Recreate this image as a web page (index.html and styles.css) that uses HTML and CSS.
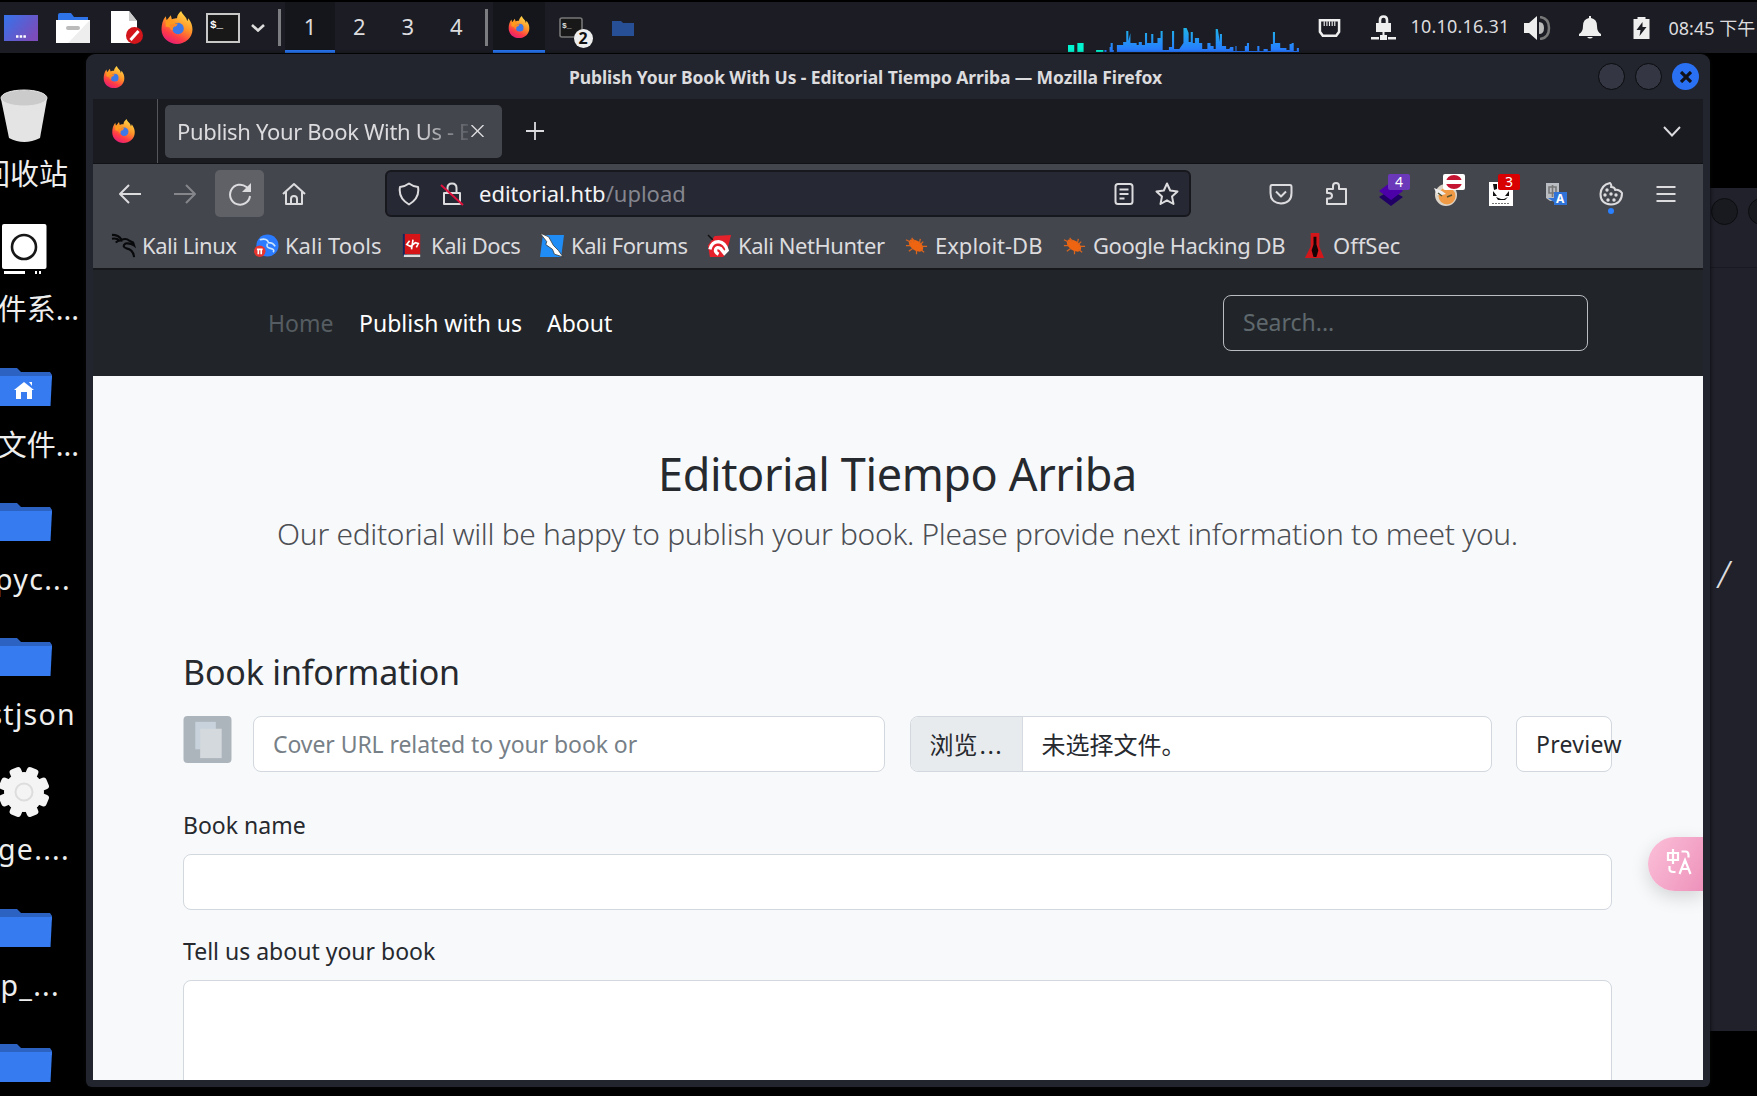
FILE: index.html
```html
<!DOCTYPE html>
<html lang="zh-CN">
<head>
<meta charset="utf-8">
<title>Publish Your Book With Us - Editorial Tiempo Arriba</title>
<link rel="stylesheet" href="styles.css">
</head>
<body>
<svg width="0" height="0" class="defs">
  <defs>
    <linearGradient id="fxg" x1=".8" y1="0" x2=".3" y2="1"><stop offset="0" stop-color="#ffe14d"/><stop offset=".45" stop-color="#ff9328"/><stop offset=".75" stop-color="#ff3d45"/><stop offset="1" stop-color="#e51d77"/></linearGradient>
    <linearGradient id="desk" x1="0" x2="1" y2=".6"><stop offset="0" stop-color="#3573ec"/><stop offset="1" stop-color="#7a4dbb"/></linearGradient>
    <linearGradient id="cpu" x1="0" y1="0" x2="0" y2="1"><stop offset="0" stop-color="#20b4e8"/><stop offset="1" stop-color="#2777ff"/></linearGradient>
    <symbol id="fx" viewBox="0 0 32 32">
      <path fill="url(#fxg)" d="M20 0c1 3 3 4 5 7l1 3 1-3c3 4 4 7 4 11 0 8-7 14-15 14S1 26 1 18c0-5 1-9 4-13l1 4 4-5 1 4c2-1 4-1 5-1 0-3 2-5 4-7z"/>
      <path fill="#ff9a1f" d="M5 9c2-1 4-1 7 0l5 3-4 2-3 2-5-1z"/>
      <circle cx="17" cy="17" r="5.6" fill="#3c78e8"/>
      <path fill="#ff8a25" d="M9 13c3 0 5-1 8-1l-2 3c-3 0-3 2-3 4-3-1-4-3-3-6z"/>
    </symbol>
    <symbol id="folder" viewBox="0 0 52 38"><path fill="#2c62c2" d="M0 0h17l4 4h29l2 3v4H0z"/><path fill="#367bf0" d="M0 8h52l-1.500 30H0z"/></symbol>
    <symbol id="bug" viewBox="0 0 26 26"><ellipse cx="12.500" cy="13" rx="8.500" ry="5" transform="rotate(35 12.500 13)" fill="#ee6410"/><path stroke="#d9651f" stroke-width="1.300" d="M2 7l6 3M8 5l3 4M17 6l-1 5M24 14l-6 0M21 20l-4-3M13 22l0-4M5 19l4-3M2 13l5 0M20 9l-3 3"/></symbol>
  </defs>
</svg>

<header class="panel">
  <svg class="p-desk" viewBox="0 0 34 26"><rect width="34" height="26" fill="url(#desk)"/><path stroke="#fff" stroke-width="2.500" stroke-dasharray="2.500 1.200" d="M12 21.500h10"/></svg>
  <svg class="p-files" viewBox="0 0 34 30"><path fill="#2f73e8" d="M2 2q0-2 2-2h11l3 4h14v6H2z"/><rect y="7" width="34" height="23" fill="#fff"/><path fill="#eee" d="M34 7v23H12z"/><rect x="10" y="13" width="14" height="4" rx="2" fill="#bbb"/></svg>
  <svg class="p-doc" viewBox="0 0 33 33"><path fill="#fff" d="M0 0h18l8 10v22H0z"/><path fill="#ccc" d="M18 0l8 10h-8z"/><circle cx="23.500" cy="24.500" r="8.500" fill="#d3161b"/><path stroke="#fff" stroke-width="3" d="M19.500 29l8-9"/></svg>
  <svg class="p-fx"><use href="#fx"/></svg>
  <svg class="p-term" viewBox="0 0 34 30"><rect x="1" y="1" width="32" height="28" fill="#181818" stroke="#c8c8c8" stroke-width="2"/><text x="4" y="15" class="term-glyph">$_</text></svg>
  <svg class="p-chev" viewBox="0 0 14 8"><path fill="none" stroke="#ddd" stroke-width="2.600" d="M1 1l6 5.500L13 1"/></svg>
  <i class="sep s1"></i>
  <nav class="spaces"><span class="on">1</span><span>2</span><span>3</span><span>4</span></nav>
  <i class="sep s2"></i>
  <div class="task on"><svg class="t-fx"><use href="#fx"/></svg></div>
  <div class="task-term"><svg viewBox="0 0 24 21"><rect x="1" y="1" width="22" height="19" rx="2" fill="#181818" stroke="#777" stroke-width="1.600"/><text x="3" y="11" class="term-small">$_</text></svg><b class="count">2</b></div>
  <svg class="t-folder" viewBox="0 0 22 16"><path fill="#264f95" d="M0 1h9l2 2h11v13H0z"/></svg>
  <svg class="graph" viewBox="0 0 224 24" preserveAspectRatio="none"><path fill="#00f5d0" d="M0 17h6v7H0zM9 15h6v9H9zM27 22h7v2h-7z"/><path fill="url(#cpu)" d="M35 24v-2h2v2h3v-5h1v-4h2v7h1v2h3v-7h6v-3h3V3h2v10l2-8v10h6v2h2v-3h3v3h3V5h2v10h4V6h2v9h4V10h3V3h2v19h6v-3h3V3h2v18h5l4-6V0h3l2 5v9h2V4h2v11h2v-5h4v5h3v6h5v-6h3v3h3v3h2V1h2l2 13V6h2v12h4v3h3l1-2h3v4h2v-5h1v5h8v-5h2v-3h2v8h8v-5h2v5h4v-2h4v2h3v-7h2V4h2v11h5v5h6v2h3v-6h2v-1h2v8h3v-3h2v4z"/></svg>
  <svg class="eth" viewBox="0 0 24 20"><path fill="none" stroke="#eee" stroke-width="2.600" d="M2 2h20v12l-3 4H5l-3-4z"/><path stroke="#eee" stroke-width="1.200" d="M6.500 3v5M9.300 3v5M12 3v5M14.800 3v5M17.500 3v5"/></svg>
  <svg class="vpn" viewBox="0 0 25 25"><path fill="none" stroke="#eee" stroke-width="2.600" d="M9 9V5q0-3.500 3.500-3.500T16 5v4"/><path fill="#eee" d="M5 8h15v9H5zM11.500 17h2v3h-2zM0 22h8v2.500H0zM17 22h8v2.500h-8zM9 20h7v5H9z"/></svg>
  <span class="ip">10.10.16.31</span>
  <svg class="vol" viewBox="0 0 27 24"><path fill="#eee" d="M0 7h5l8-7v24l-8-7H0z"/><path fill="#bbb" d="M15 6q5 0 5 6t-5 6z"/><path fill="none" stroke="#777" stroke-width="2.500" d="M16 1q9 1 9 11t-9 11"/></svg>
  <svg class="bell" viewBox="0 0 22 23"><path fill="#eee" d="M10 0h2v2q6 1 6 8 0 6 4 8v2H0v-2q4-2 4-8 0-7 6-8zM8 21h6q-3 3-6 0z"/></svg>
  <svg class="bat" viewBox="0 0 16 22"><path fill="#eee" d="M4 0h8v2h4v20H0V2h4z"/><path fill="#1c1d24" d="M9 5l-6 8h4l-1 6 7-9H9z"/></svg>
  <span class="clock">08:45 下午</span>
</header>

<aside class="desktop">
  <div class="item"><svg class="ic" viewBox="0 0 52 54"><path fill="#e4e4e4" d="M1 10l8 39q15 8 31 0l7-39z"/><ellipse cx="24" cy="9" rx="23" ry="8" fill="#cbcbcb" stroke="#e6e6e6"/></svg><span class="e68">回收站</span></div>
  <div class="item"><svg class="ic" viewBox="0 0 52 54"><rect x="2" y="0" width="44.500" height="45" rx="2" fill="#fff"/><circle cx="24" cy="23" r="12" fill="none" stroke="#171717" stroke-width="2.600"/><path fill="#fff" d="M4 47h21v3H4zM35 47h2v3h-2zM39 47h2v3h-2z"/></svg><span class="e78">文件系...</span></div>
  <div class="item"><svg class="ic" viewBox="0 0 52 54"><use href="#folder" y="8" width="52" height="38"/><path fill="#fff" d="M24 22l10 8h-2v9h-5v-7h-6v7h-5v-9h-2zM29 22h3v4z"/></svg><span class="e78">主文件...</span></div>
  <div class="item"><svg class="ic" viewBox="0 0 52 54"><use href="#folder" y="8" width="52" height="38"/></svg><span class="lat e69">pyc...</span></div>
  <div class="item"><svg class="ic" viewBox="0 0 52 54"><use href="#folder" y="8" width="52" height="38"/></svg><span class="lat e73">stjson</span></div>
  <div class="item"><svg class="ic" viewBox="0 0 52 54"><g transform="translate(24 27)" fill="#f4f4f4"><circle r="20"/><rect x="-6" y="-25.500" width="12" height="51" rx="3" transform="rotate(22.500)"/><rect x="-6" y="-25.500" width="12" height="51" rx="3" transform="rotate(67.500)"/><rect x="-6" y="-25.500" width="12" height="51" rx="3" transform="rotate(112.500)"/><rect x="-6" y="-25.500" width="12" height="51" rx="3" transform="rotate(157.500)"/><circle r="8.500" stroke="#ddd" stroke-width="2"/></g></svg><span class="lat e68">ge....</span></div>
  <div class="item"><svg class="ic" viewBox="0 0 52 54"><use href="#folder" y="8" width="52" height="38"/></svg><span class="lat e58">p_...</span></div>
  <div class="item"><svg class="ic" viewBox="0 0 52 54"><use href="#folder" y="8" width="52" height="38"/></svg></div>
</aside>

<section class="terminal">
  <div class="term-head"><i></i><i></i></div>
  <span class="slash">/</span>
</section>

<main class="window">
  <div class="titlebar">
    <svg class="w-fx"><use href="#fx"/></svg>
    <h1>Publish Your Book With Us - Editorial Tiempo Arriba — Mozilla Firefox</h1>
    <div class="wbtns"><i></i><i></i><i class="close"><svg viewBox="0 0 12 12"><path stroke="#101218" stroke-width="3.200" d="M1 1l10 10M11 1L1 11"/></svg></i></div>
  </div>
  <div class="chrome">
    <div class="tabs">
      <div class="pinned"><svg><use href="#fx"/></svg></div>
      <div class="tab"><span class="tab-label">Publish Your Book With Us - Editorial</span><svg viewBox="0 0 12 12"><path stroke="#dcdcdf" stroke-width="1.400" d="M0 0l12 12M12 0L0 12"/></svg></div>
      <svg class="plus" viewBox="0 0 18 18"><path stroke="#dcdcdf" stroke-width="1.800" d="M9 0v18M0 9h18"/></svg>
      <svg class="all" viewBox="0 0 18 11"><path fill="none" stroke="#dcdcdf" stroke-width="1.900" d="M1 1l8 8.500L17 1"/></svg>
    </div>
    <div class="toolbar">
      <svg class="ti back" viewBox="0 0 24 24"><path d="M23 12H2M11 3l-9 9 9 9"/></svg>
      <svg class="ti fwd" viewBox="0 0 24 24"><path d="M1 12h21M13 3l9 9-9 9"/></svg>
      <div class="reload"><svg class="ti" viewBox="0 0 24 24"><path d="M22 14a10 10 0 1 1-3.500-9l2 2"/><path fill="#dcdcdf" stroke="none" d="M23 1v9h-9z"/></svg></div>
      <svg class="ti home" viewBox="0 0 24 24"><path d="M1 12L12 2l11 10M4 10v12h16V10M9 22v-5q0-3 3-3t3 3v5"/></svg>
      <div class="urlbar">
        <svg class="ti" viewBox="0 0 24 24"><path d="M12 1.500q4 3 9 3.500 2 11-9 17.500Q1 16 3 5q5-.5 9-3.500z"/></svg>
        <svg class="ti ins" viewBox="0 0 24 24"><path d="M4 11h16v11H4zM7.500 11V6q0-4.500 4.500-4.500T16.500 6v5"/><path d="M1 3l22 20" stroke="#e0113d"/></svg>
        <span class="url">editorial.htb<em>/upload</em></span>
        <svg class="ti" viewBox="0 0 24 24"><rect x="3.500" y="2" width="17" height="20" rx="2.500"/><path d="M7.500 7.500h9M7.500 12h9M7.500 16.500h5"/></svg>
        <svg class="ti star" viewBox="0 0 24 24"><path d="M12 1.500l3.200 7 7.300.9-5.500 5 1.500 7.600L12 18.300 5.500 22 7 14.400l-5.500-5 7.300-.9z"/></svg>
      </div>
      <div class="exts">
        <svg class="ti" viewBox="0 0 24 24"><path d="M3 3h18q1.500 0 1.500 2v6q0 10-10.500 10.500Q1.500 21 1.500 11V5q0-2 1.500-2z"/><path d="M7 9.500l5 5 5-5"/></svg>
        <svg class="ti" viewBox="0 0 24 24"><path d="M3 9V7h6V4q0-3 3-3t3 3v3h7v15H3v-5.500h2q3 0 3-2.700T5 11H3z"/></svg>
        <div class="ext"><svg viewBox="0 0 24 24"><path fill="#210066" d="M0 15l12-7 12 7-12 9z"/><path fill="#4b00a8" d="M0 9l12-9 12 9-12 9z"/></svg><b>4</b></div>
        <div class="ext"><svg viewBox="0 0 24 24"><circle cx="12" cy="13" r="11" fill="#ddd4c8"/><circle cx="13" cy="14" r="8.500" fill="#f09a45"/><path fill="#eee" d="M0 6l8 3 4 3-4 1H3z"/><path stroke="#553" stroke-width="1.500" d="M4 11l4 3m5 1l5-2"/></svg><b class="stop"><i></i></b></div>
        <div class="ext"><svg viewBox="0 0 24 24"><path fill="#fff" d="M0 0h24v24H0z"/><path fill="#111" d="M4 2h4v5l-3 1zM4 9l4 5H4zM20 9v5h-4zM7 15l5 2h3l4-2-3 3H9z"/><path stroke="#777" stroke-dasharray="2 1" d="M3 21.500h18"/></svg><b class="red">3</b></div>
        <div class="ext"><svg viewBox="0 0 24 24"><path fill="#b9bdc2" d="M2 1h13v18H6l-4-3z"/><path stroke="#777" stroke-width="1.600" fill="none" d="M5 5h7v6H5zM8.500 3v12"/><path fill="#2f73d8" d="M4 16h6v4zM10 10h13v13H10z"/><text x="12" y="21" class="a">A</text></svg></div>
        <div class="ext cookie"><svg class="ti" viewBox="0 0 24 24"><path d="M11 1q2 2 1 4 4 0 4 3 4-1 7 3 0 11-11 11.500Q1.500 22 1.500 12 2 3 11 1z"/><g fill="#dcdcdf" stroke="none"><circle cx="8" cy="8" r="1.700"/><circle cx="6" cy="13" r="1.700"/><circle cx="12" cy="12" r="1.700"/><circle cx="17" cy="13" r="1.700"/><circle cx="9" cy="18" r="1.700"/><circle cx="15" cy="18" r="1.700"/></g></svg><i></i></div>
        <svg class="ti" viewBox="0 0 24 24"><path d="M2.500 5h19M2.500 12h19M2.500 19h19"/></svg>
      </div>
    </div>
    <div class="bookmarks">
      <a class="tight w143"><svg viewBox="0 0 26 26"><path fill="none" stroke="#08090b" stroke-width="2.200" d="M1 2q7 0 10 5 5-2 8 1l4 2 1 3q-4-3-9-2-4 3 1 5 7 1 8 9M1 6q5-1 8 2M5 10q2-3 7-2"/></svg>Kali Linux</a>
      <a class="w146"><svg viewBox="0 0 26 26"><circle cx="14" cy="13" r="11.500" fill="#2a7bff"/><path fill="none" stroke="#c9e4ff" stroke-width="1.700" d="M6 7q8-2 9 3 5 0 7 4M14 11q-2 4 3 5t3 4"/><circle cx="6" cy="19" r="6" fill="#e8342f"/><path stroke="#fff" stroke-width="1.700" d="M3 17h6M4.500 17v5M7.500 17v5"/></svg>Kali Tools</a>
      <a class="tight w140"><svg viewBox="0 0 26 26"><path fill="#14265e" d="M3 1h4v23H3z"/><path fill="#d41416" d="M5 1h16v21H5z"/><path fill="#ddd" d="M4 22.500h17v2.500H4z"/><path fill="none" stroke="#fff" stroke-width="1.700" d="M10 8l-3 4 4 2 5-4 3 1-2 4M13.500 7l-1.500 10"/></svg>Kali Docs</a>
      <a class="tight w167"><svg viewBox="0 0 26 26"><path fill="#1f8df5" d="M3 2h22l-3 23H0z"/><path fill="#fff" stroke="#333" stroke-width=".8" d="M0 0l9 4 5 9 5 5 5 7-9-3-2-5-7-5 1-3z"/></svg>Kali Forums</a>
      <a class="tight w197"><svg viewBox="0 0 26 26"><path fill="#e5212b" d="M8 3l17-1-3 12-5 11H3L1 13z"/><path fill="none" stroke="#fff" stroke-width="3.500" d="M3 17q2-8 9-8 7 1 9 9l-3 3-4-5q-4-2-5 1t3 5"/><path stroke="#111" stroke-width="1.600" d="M1 2l5 5"/></svg>Kali NetHunter</a>
      <a class="w158"><svg><use href="#bug"/></svg>Exploit-DB</a>
      <a class="tight w240"><svg><use href="#bug"/></svg>Google Hacking DB</a>
      <a><svg viewBox="0 0 26 26"><path fill="#d2161a" d="M9 0h9v14l5 12H3l6-12z"/><path fill="#140405" d="M12 4h3v8l2 6-2 7h-3l-2-7 2-6z"/></svg>OffSec</a>
    </div>
  </div>
  <div class="page">
    <nav class="site">
      <a class="muted">Home</a><a class="pw">Publish with us</a><a>About</a>
      <div class="search">Search...</div>
    </nav>
    <div class="content">
      <h2>Editorial Tiempo Arriba</h2>
      <p class="lead">Our editorial will be happy to publish your book. Please provide next information to meet you.</p>
      <h3>Book information</h3>
      <div class="row">
        <svg class="thumb" viewBox="0 0 49 48"><rect width="49" height="48" rx="4" fill="#adb5bc"/><path fill="#c7d2dc" d="M12 6h21v28H12z"/><path fill="#d4d9dd" d="M17 13h22v30H17z"/></svg>
        <div class="field url-in">Cover URL related to your book or</div>
        <div class="field file"><span class="browse">浏览<span class="dots">...</span></span><span class="none">未选择文件。</span></div>
        <div class="field preview">Preview</div>
      </div>
      <label>Book name</label>
      <div class="field"></div>
      <label class="l2">Tell us about your book</label>
      <div class="field area"></div>
    </div>
    <div class="translate"><svg viewBox="0 0 26 26"><g fill="none" stroke="#fff" stroke-width="2.200"><path d="M1.500 4h10v7h-10zM6.500 0v15M15 2.500h4q3 0 3 4v2M3 17v3q0 3 4 3h2M13 25l5.500-14L24 25M15 20h7"/></g></svg></div>
  </div>
</main>
</body>
</html>
```
FILE: styles.css
```css
* { box-sizing: border-box; }
body { margin: 0; width: 1757px; height: 1096px; overflow: hidden; position: relative; background: #000; color: #dcdcdf; font-family: "Noto Sans", "Noto Sans CJK SC", sans-serif; font-size: 22px; display: flex; flex-direction: column; }
svg { display: block; flex: none; }
.defs { position: absolute; }

/* desktop panel */
.panel { height: 53px; flex: none; border-top: 2px solid #000; background: #1c1d24; display: flex; align-items: center; padding-left: 4px; }
.p-desk { width: 34px; height: 26px; }
.p-files { width: 34px; height: 30px; margin-left: 18px; }
.p-doc { width: 33px; height: 33px; margin-left: 21px; }
.p-fx { width: 34px; height: 33px; margin-left: 16px; }
.p-term { width: 34px; height: 30px; margin-left: 12px; }
.term-glyph { font: bold 11px "Liberation Mono", monospace; fill: #fff; }
.term-small { font: bold 8px "Liberation Mono", monospace; fill: #ddd; }
.p-chev { width: 14px; height: 8px; margin-left: 11px; }
.sep { width: 3px; height: 37px; background: #7c7d80; flex: none; }
.s1 { margin-left: 13px; }
.spaces { display: flex; height: 51px; margin-left: 4px; font-size: 22px; }
.spaces span { width: 48.500px; display: grid; place-items: center; padding-bottom: 3px; }
.spaces .on { width: 50px; padding-bottom: 0; }
.on { background: #15161b; border-bottom: 3px solid #2777f5; }
.s2 { margin-left: 4px; }
.task { width: 52px; height: 51px; margin-left: 5px; padding-top: 1px; display: grid; place-items: center; }
.t-fx { width: 22px; height: 22px; }
.task-term { position: relative; margin-left: 14px; width: 24px; }
.task-term svg { width: 24px; height: 21px; }
.count { position: absolute; left: 15px; top: 12px; width: 19px; height: 19px; border-radius: 50%; background: #eee; color: #111; font: bold 16px/19px "Noto Sans", sans-serif; text-align: center; }
.t-folder { width: 22px; height: 16px; margin-left: 29px; }
.graph { width: 233px; height: 24px; margin: 25px 0 0 434px; }
.eth { width: 23px; height: 20px; margin-left: 17px; }
.vpn { width: 25px; height: 25px; margin-left: 30px; }
.ip { width: 98px; margin: 0 0 4px 15px; font-size: 18px; letter-spacing: .2px; white-space: nowrap; }
.vol { width: 27px; height: 24px; margin-left: 15px; }
.bell { width: 22px; height: 23px; margin-left: 28px; }
.bat { width: 17px; height: 22px; margin-left: 32px; }
.clock { margin: 0 0 2px 19px; font-size: 18px; white-space: nowrap; }

/* desktop icons */
.desktop { width: 86px; display: flex; flex-direction: column; padding-top: 36px; overflow: hidden; font-size: 29px; color: #eee; }
.item { height: 135.300px; flex: none; display: flex; flex-direction: column; }
.ic { width: 52px; height: 54px; }
.item span { display: flex; justify-content: flex-end; height: 40px; line-height: 40px; margin-top: 11px; white-space: nowrap; }
.item .lat { font-size: 28.500px; letter-spacing: 1.300px; margin-top: 10px; }
.e68 { width: 68px; } .e78 { width: 79px; } .e69 { width: 71px; } .e73 { width: 76px; } .lat.e68 { width: 70px; } .e58 { width: 60px; }

/* window behind the browser */
.terminal { position: absolute; left: 1700px; top: 188px; width: 57px; height: 843px; background: #20212b; overflow: hidden; }
.term-head { height: 80px; padding: 10px 0 0 11px; display: flex; gap: 10px; border-bottom: 1px solid #191a21; }
.term-head i { flex: none; width: 27px; height: 27px; border-radius: 50%; background: #191a1f; border: 1px solid #0b0c0e; }
.slash { display: block; margin: 284px 0 0 16px; width: 17px; text-align: center; font: 300 38px/42px "Noto Sans", sans-serif; transform: skewX(-8deg); }

/* browser window */
.window { position: absolute; left: 86px; top: 54px; width: 1624px; height: 1033px; background: #23252e; border-radius: 9px 9px 6px 6px; padding: 0 7px 7px; display: flex; flex-direction: column; box-shadow: 0 0 4px #08090c; }
.titlebar { height: 45px; flex: none; display: flex; align-items: center; }
.w-fx { width: 22px; height: 22px; margin-left: 10px; }
.titlebar h1 { margin: 0 0 0 444px; width: 593px; font-size: 17.500px; letter-spacing: -.1px; font-weight: 700; white-space: nowrap; }
.wbtns { display: flex; gap: 10px; margin-left: 436px; }
.wbtns i { width: 27px; height: 27px; border-radius: 50%; background: #343743; border: 1px solid #0a0b0e; display: grid; place-items: center; }
.wbtns .close { background: #2a70f2; border: 0; }
.wbtns svg { width: 12px; height: 12px; }
.chrome { height: 171px; flex: none; background: #44464e; border-bottom: 2px solid #17181c; }
.tabs { height: 65px; background: #1a1b20; display: flex; align-items: center; border-bottom: 1px solid #111216; }
.pinned { width: 65px; height: 64px; border-right: 1px solid #55565b; padding: 20px 0 0 18px; }
.pinned svg { width: 25px; height: 24px; }
.tab { width: 337px; height: 53px; margin-left: 7px; background: #44464e; border-radius: 5px; display: flex; align-items: center; padding-left: 12px; }
.tab-label { width: 291px; overflow: hidden; white-space: nowrap; letter-spacing: -.34px; -webkit-mask-image: linear-gradient(90deg, #000 240px, transparent 300px); mask-image: linear-gradient(90deg, #000 240px, transparent 300px); }
.tab svg { width: 13px; height: 12px; margin-left: 3px; }
.plus { width: 18px; height: 18px; margin-left: 24px; }
.all { width: 18px; height: 11px; margin-left: 1119px; }
.toolbar { height: 59px; padding: 0 0 0 25px; display: flex; align-items: center; }
.ti { width: 24px; height: 24px; fill: none; stroke: #dcdcdf; stroke-width: 2; stroke-linejoin: round; }
.fwd { margin-left: 31px; stroke: #85868b; }
.reload { width: 49px; height: 47px; margin-left: 18px; border-radius: 5px; background: #606167; display: grid; place-items: center; }
.home { margin-left: 18px; }
.urlbar { width: 806px; height: 47px; margin-left: 79px; border: 2px solid #17181d; border-radius: 6px; background: #262833; display: flex; align-items: center; padding-left: 10px; }
.ins { margin-left: 19px; }
.url { width: 633px; margin: 0 0 2px 15px; color: #f4f4f6; white-space: nowrap; }
.url em { font-style: normal; color: #85868e; }
.star { margin-left: 19px; }
.exts { display: flex; margin-left: 78px; gap: 31px; }
.ext { position: relative; }
.ext svg { width: 24px; height: 24px; }
.ext b { position: absolute; left: 9px; top: -8px; width: 22px; height: 16px; background: #6a38b8; color: #fff; font: 14px/16px "Noto Sans", sans-serif; text-align: center; border-radius: 2px; }
.ext .red { background: #d80000; }
.ext .stop { background: #fff; }
.stop i { display: block; width: 16px; height: 14px; margin: 1px auto; border-radius: 50%; background: linear-gradient(#c41432 5px, #fff 5px 9px, #c41432 9px); }
.a { font: bold 12px "Noto Sans", sans-serif; fill: #fff; }
.cookie i { position: absolute; left: 9px; top: 26px; width: 6px; height: 6px; border-radius: 50%; background: #2a80ff; }
.bookmarks { height: 44px; display: flex; align-items: center; padding-left: 18px; }
.bookmarks a { display: flex; align-items: center; flex: none; white-space: nowrap; gap: 6px; }
.bookmarks .tight { letter-spacing: -.46px; }
.bookmarks svg { width: 25px; height: 25px; }
.w140 { width: 140px; } .w143 { width: 143px; } .w146 { width: 146px; } .w158 { width: 158px; } .w167 { width: 167px; } .w197 { width: 197px; } .w240 { width: 240px; }

/* web page */
.page { flex: 1; min-height: 0; position: relative; overflow: hidden; background: #f8f9fb; color: #26292e; font-size: 23px; }
.site { height: 106px; background: #212529; color: #fff; display: flex; align-items: center; padding: 0 0 0 175px; white-space: nowrap; }
.site a { width: 65px; }
.site .muted { width: 91px; color: #565d62; }
.site .pw { width: 188px; }
.search { width: 365px; height: 56px; margin-left: 611px; border: 1.500px solid #b9bdc1; border-radius: 8px; padding-left: 19px; line-height: 53px; color: #5f686d; }
.content { padding: 67px 91px 0 90px; }
h2 { margin: 0; height: 62px; line-height: 62px; font-size: 45px; font-weight: 400; letter-spacing: -.38px; text-align: center; white-space: nowrap; }
.lead { margin: 0; height: 58px; line-height: 58px; font-size: 30px; font-weight: 300; letter-spacing: -.31px; text-align: center; white-space: nowrap; color: #4c4f54; }
h3 { margin: 79px 0 0; height: 60px; line-height: 60px; font-size: 34px; letter-spacing: -.18px; font-weight: 400; white-space: nowrap; }
.row { display: flex; margin-top: 14px; }
.thumb { width: 49px; height: 47px; }
.field { height: 56px; border: 1.500px solid #d2d8de; border-radius: 8px; background: #fff; line-height: 54px; white-space: nowrap; }
.url-in { width: 633px; margin-left: 21px; padding-left: 19px; color: #777f87; letter-spacing: -.08px; }
.file { width: 582px; margin-left: 25px; display: flex; overflow: hidden; font-family: "Noto Sans CJK SC", sans-serif; font-size: 24px; line-height: 53px; }
.browse { width: 112px; background: #e8ebee; border-right: 1px solid #d6dbe1; padding-left: 18px; }
.dots { font-family: "Noto Sans", sans-serif; letter-spacing: 1.500px; margin-left: 2px; }
.none { padding-left: 18px; }
.preview { width: 96px; margin-left: 24px; padding-left: 19px; letter-spacing: .3px; }
label { display: block; height: 34px; line-height: 34px; margin: 36px 0 12px; white-space: nowrap; }
.l2 { margin: 24px 0 12px; }
.area { height: 140px; }
.translate { position: absolute; right: 0; top: 567px; width: 55px; height: 54px; border-radius: 27px 0 0 27px; background: linear-gradient(120deg, #fbc0d9, #ee92bb); box-shadow: 0 6px 18px rgba(0,0,0,.15); padding: 12px 0 0 18px; }
.translate svg { width: 27px; height: 26px; }
```
